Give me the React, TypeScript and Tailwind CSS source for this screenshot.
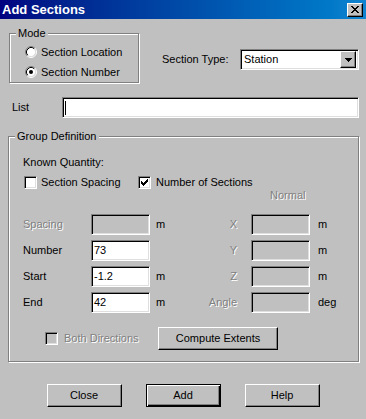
import React from "react";

const sunken =
  "border border-t-[#808080] border-l-[#808080] border-b-white border-r-white shadow-[inset_1px_1px_0_#000,inset_-1px_-1px_0_#dfdfdf]";
const raised =
  "border border-t-white border-l-white border-b-black border-r-black shadow-[inset_-1px_-1px_0_#808080]";
const etched =
  "border border-[#808080] shadow-[inset_1px_1px_0_#fff,1px_1px_0_#fff]";
const dim = "text-[#808080] [text-shadow:1px_1px_0_#ffffff]";

function Radio({ checked }: { checked?: boolean }) {
  return (
    <svg width="12" height="12" viewBox="0 0 12 12" className="shrink-0">
      <circle cx="6" cy="6" r="4.5" fill="#fff" />
      <path d="M2.11 9.89A5.5 5.5 0 0 1 9.89 2.11" fill="none" stroke="#808080" />
      <path d="M9.89 2.11A5.5 5.5 0 0 1 2.11 9.89" fill="none" stroke="#fff" />
      <path d="M2.82 9.18A4.5 4.5 0 0 1 9.18 2.82" fill="none" stroke="#000" />
      <path d="M9.18 2.82A4.5 4.5 0 0 1 2.82 9.18" fill="none" stroke="#dfdfdf" />
      {checked && <circle cx="6" cy="6" r="2" fill="#000" />}
    </svg>
  );
}

function Check({ checked, disabled }: { checked?: boolean; disabled?: boolean }) {
  return (
    <div
      className={`${sunken} w-[13px] h-[13px] shrink-0 flex items-center justify-center ${
        disabled ? "bg-[#c0c0c0]" : "bg-white"
      }`}
    >
      {checked && (
        <svg width="7" height="7" viewBox="0 0 7 7" shapeRendering="crispEdges">
          <path
            d="M0 2h1v3H0zM1 3h1v3H1zM2 4h1v3H2zM3 3h1v3H3zM4 2h1v3H4zM5 1h1v3H5zM6 0h1v3H6z"
            fill="#000"
          />
        </svg>
      )}
    </div>
  );
}

function Field({ value, disabled }: { value?: string; disabled?: boolean }) {
  return (
    <div
      className={`${sunken} h-[21px] flex items-center pl-[2px] ${
        disabled ? "bg-[#c0c0c0]" : "bg-white"
      }`}
    >
      {value}
    </div>
  );
}

function Button({ label, def, w }: { label: string; def?: boolean; w: string }) {
  return (
    <div
      className={`${w} h-[23px] flex items-center justify-center ${
        def
          ? "border border-black shadow-[inset_1px_1px_0_#fff,inset_-1px_-1px_0_#000,inset_-2px_-2px_0_#808080]"
          : raised
      }`}
    >
      {label}
    </div>
  );
}

function GroupBox({
  title,
  className,
  children,
}: {
  title: string;
  className: string;
  children: React.ReactNode;
}) {
  return (
    <fieldset className={`${etched} ${className}`}>
      <legend className="ml-[6px] px-[2px] leading-[12px] bg-[#c0c0c0]">{title}</legend>
      {children}
    </fieldset>
  );
}

// Number has no unit beside it in the original dialog
const rows = [
  { label: "Spacing", value: "", off: true, unit: "m", axis: "X", unit2: "m" },
  { label: "Number", value: "73", off: false, unit: null, axis: "Y", unit2: "m" },
  { label: "Start", value: "-1.2", off: false, unit: "m", axis: "Z", unit2: "m" },
  { label: "End", value: "42", off: false, unit: "m", axis: "Angle", unit2: "deg" },
];

export default function App() {
  return (
    <div className="w-[366px] h-[419px] bg-[#c0c0c0] text-black text-[11px] leading-[13px] font-['Liberation_Sans',Arial,sans-serif] overflow-hidden">
      {/* Title bar */}
      <div className="h-[19px] flex items-center justify-between pl-[2px] pr-[3px] bg-gradient-to-r from-[#000080] to-[#1084d0]">
        <span className="text-white font-bold text-[13px]">Add Sections</span>
        <div className={`${raised} bg-[#c0c0c0] w-[16px] h-[14px] flex items-center justify-center`}>
          <svg width="8" height="7" viewBox="0 0 8 7" shapeRendering="crispEdges">
            <path
              d="M0 0h2v1H0zM6 0h2v1H6zM1 1h2v1H1zM5 1h2v1H5zM2 2h4v1H2zM3 3h2v1H3zM2 4h4v1H2zM1 5h2v1H1zM5 5h2v1H5zM0 6h2v1H0zM6 6h2v1H6z"
              fill="#000"
            />
          </svg>
        </div>
      </div>

      <div className="pl-[8px]">
        {/* Mode + section type */}
        <div className="flex items-start mt-[8px]">
          <GroupBox title="Mode" className="ml-[1px] w-[130px] h-[56px]">
            <div className="flex flex-col pl-[15px] pt-[3px]">
              <div className="h-[20px] flex items-center gap-[4px]">
                <Radio />
                <span>Section Location</span>
              </div>
              <div className="h-[20px] flex items-center gap-[4px]">
                <Radio checked />
                <span>Section Number</span>
              </div>
            </div>
          </GroupBox>
          <div className="flex items-center mt-[22px] ml-[23px]">
            <span className="w-[78px]">Section Type:</span>
            <div className={`${sunken} bg-white w-[119px] h-[21px] flex items-center justify-between pl-[3px] pr-[2px]`}>
              <span>Station</span>
              <div className={`${raised} bg-[#c0c0c0] w-[16px] h-[17px] flex items-center justify-center`}>
                <svg width="7" height="4" viewBox="0 0 7 4" shapeRendering="crispEdges">
                  <path d="M0 0h7v1H0zM1 1h5v1H1zM2 2h3v1H2zM3 3h1v1H3z" fill="#000" />
                </svg>
              </div>
            </div>
          </div>
        </div>

        {/* List */}
        <div className="flex items-center mt-[14px]">
          <span className="ml-[4px] w-[50px]">List</span>
          <div className={`${sunken} bg-white w-[297px] h-[21px] flex items-center pl-[2px]`}>
            <span className="w-px h-[14px] bg-black" />
          </div>
        </div>

        {/* Group definition */}
        <GroupBox title="Group Definition" className="mt-[12px] w-[351px] h-[232px]">
          <div className="pl-[14px]">
            <div className="mt-[14px]">Known Quantity:</div>
            <div className="flex items-center mt-[7px] h-[13px]">
              <div className="w-[114px] flex items-center gap-[4px] ml-px">
                <Check />
                <span>Section Spacing</span>
              </div>
              <div className="flex items-center gap-[5px]">
                <Check checked />
                <span>Number of Sections</span>
              </div>
            </div>
            <div className={`h-[13px] pl-[247px] ${dim}`}>Normal</div>

            <div className="grid grid-cols-[68px_59px_50px_51px_59px_auto] gap-y-[5px] items-center mt-[12px]">
              {rows.map((r) => (
                <React.Fragment key={r.label}>
                  <span className={r.off ? dim : ""}>{r.label}</span>
                  <Field value={r.value} disabled={r.off} />
                  <span className="pl-[6px]">{r.unit ?? "\u00a0"}</span>
                  <span className={`text-right pr-[14px] ${dim}`}>{r.axis}</span>
                  <Field disabled />
                  <span className="pl-[8px]">{r.unit2}</span>
                </React.Fragment>
              ))}
            </div>

            <div className="flex items-center mt-[14px]">
              <div className="w-[113px] ml-[22px] flex items-center gap-[6px]">
                <Check disabled />
                <span className={dim}>Both Directions</span>
              </div>
              <Button label="Compute Extents" w="w-[120px]" />
            </div>
          </div>
        </GroupBox>
      </div>

      {/* Bottom buttons */}
      <div className="flex justify-center gap-[24px] mt-[22px]">
        <Button label="Close" w="w-[75px]" />
        <Button label="Add" def w="w-[75px]" />
        <Button label="Help" w="w-[75px]" />
      </div>
    </div>
  );
}
